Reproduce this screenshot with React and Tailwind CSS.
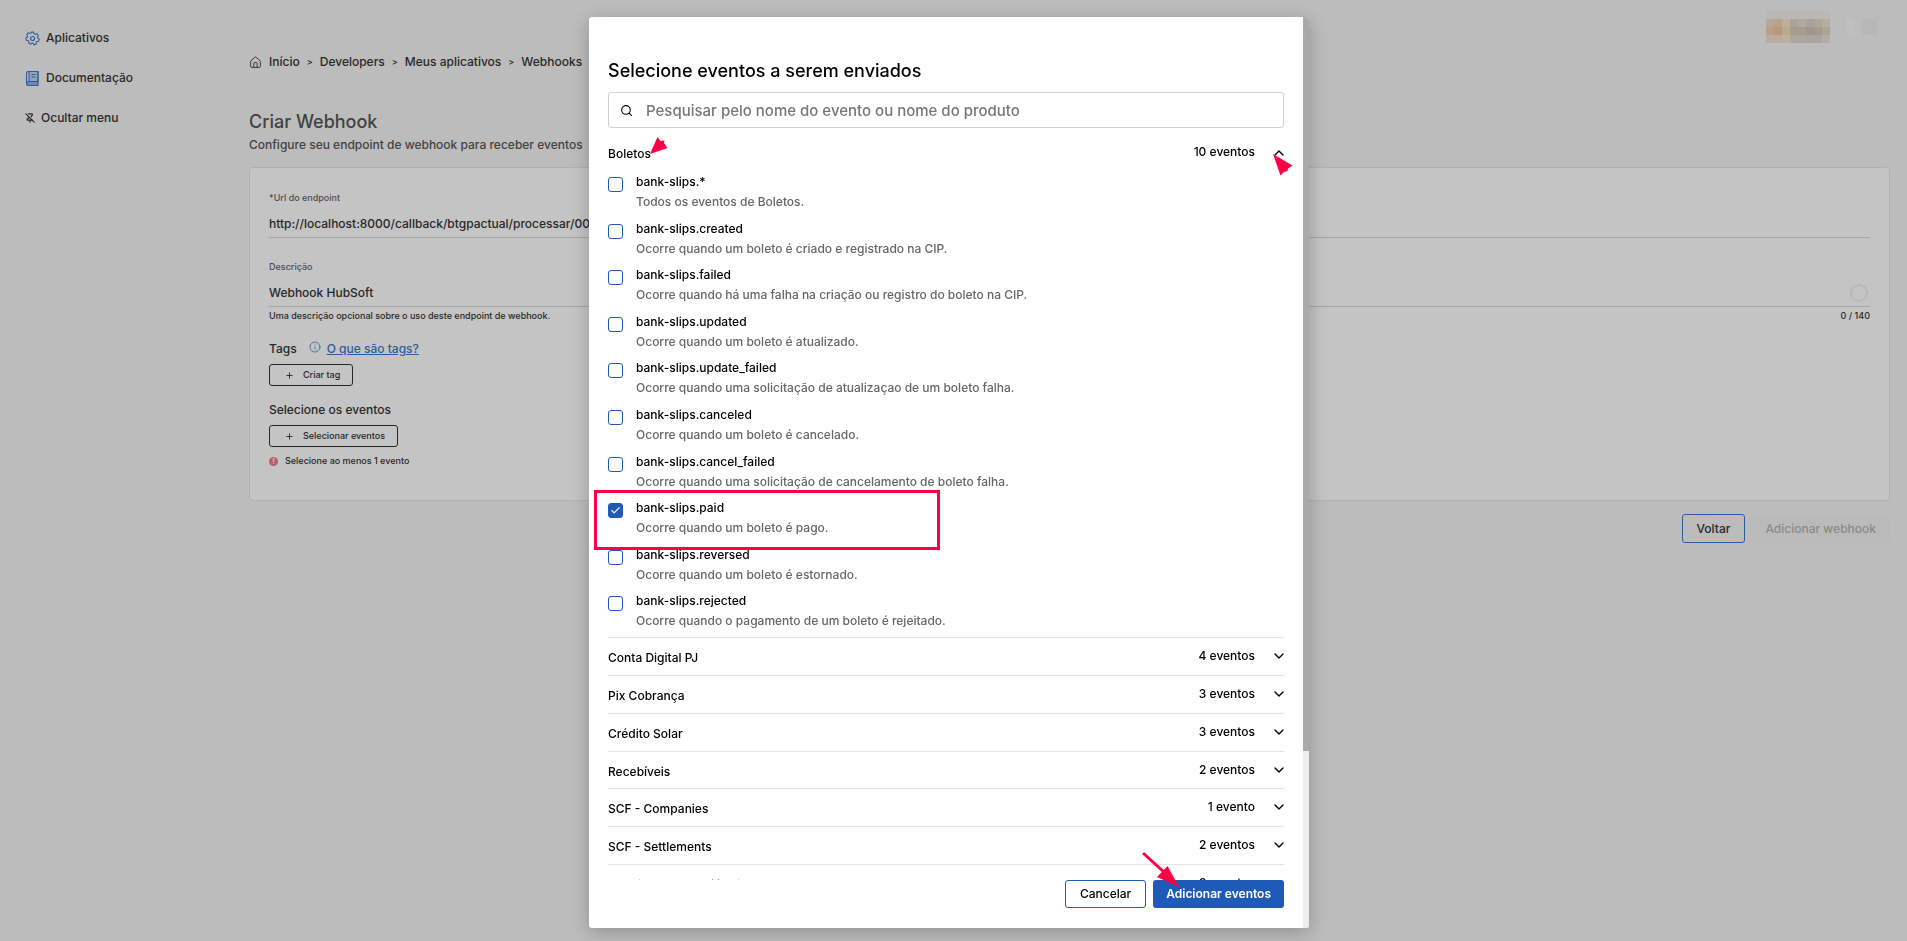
import { Search, ChevronDown, ChevronUp, House, Info, Plus, PinOff, Check } from "lucide-react";

const events = [
  ["bank-slips.*", "Todos os eventos de Boletos."],
  ["bank-slips.created", "Ocorre quando um boleto é criado e registrado na CIP."],
  ["bank-slips.failed", "Ocorre quando há uma falha na criação ou registro do boleto na CIP."],
  ["bank-slips.updated", "Ocorre quando um boleto é atualizado."],
  ["bank-slips.update_failed", "Ocorre quando uma solicitação de atualizaçao de um boleto falha."],
  ["bank-slips.canceled", "Ocorre quando um boleto é cancelado."],
  ["bank-slips.cancel_failed", "Ocorre quando uma solicitação de cancelamento de boleto falha."],
  ["bank-slips.paid", "Ocorre quando um boleto é pago."],
  ["bank-slips.reversed", "Ocorre quando um boleto é estornado."],
  ["bank-slips.rejected", "Ocorre quando o pagamento de um boleto é rejeitado."],
];

const groups = [
  ["Conta Digital PJ", "4 eventos"],
  ["Pix Cobrança", "3 eventos"],
  ["Crédito Solar", "3 eventos"],
  ["Recebíveis", "2 eventos"],
  ["SCF - Companies", "1 evento"],
  ["SCF - Settlements", "2 eventos"],
  ["Gestão para Conciliação", "2 eventos"],
];

function GearIcon() {
  return (
    <svg width="15" height="15" viewBox="0 0 30 30" fill="none" stroke="#3a78cf" strokeWidth="2.4" strokeLinejoin="round">
      <path d="M12.500 2h5l1 3.600 2.600 1.200 3.500-1.500 3.200 4-1.700 3.200.7 2.800 3 2-1.200 4.800-3.700.5-1.900 2.300.3 3.600-4.500 2.100L16 26h-2l-2.800 2.600-4.500-2.100.3-3.600-1.900-2.300-3.700-.5L.2 15.300l3-2 .7-2.800-1.700-3.200 3.200-4 3.500 1.500 2.600-1.200z" transform="translate(1.500 .5) scale(.9)" />
      <circle cx="15" cy="15" r="4" />
    </svg>
  );
}

function BookIcon() {
  return (
    <svg width="15" height="15" viewBox="0 0 30 30" fill="none" stroke="#3a78cf" strokeWidth="2.200" strokeLinejoin="round">
      <path d="M8 1v20h18V1z" fill="#c3d4ee" />
      <path d="M3 25a4 4 0 0 1 4-4h19v8H7a4 4 0 0 1-4-4z" fill="#8fb0e3" />
      <path d="M3 25V5a4 4 0 0 1 4-4h19v20M13 7h8M13 12h8" />
    </svg>
  );
}

function Sidebar() {
  return (
    <nav className="w-[249px] shrink-0 pt-7 pl-[25px] leading-5 text-[#333]">
      <a href="#aplicativos" className="flex h-5 items-center gap-[6px]">
        <GearIcon />
        Aplicativos
      </a>
      <a href="#documentacao" className="mt-5 flex h-5 items-center gap-[6px]">
        <BookIcon />
        Documentação
      </a>
      <button type="button" className="mt-5 flex h-5 items-center gap-[6px]">
        <PinOff size={10} strokeWidth={2.6} />
        Ocultar menu
      </button>
    </nav>
  );
}

function Breadcrumb() {
  const items = ["Início", "Developers", "Meus aplicativos", "Webhooks"];
  return (
    <nav aria-label="Trilha" className="flex h-5 items-center gap-[7px] leading-5 text-[#333]">
      <House size={13} strokeWidth={1.6} />
      <ol className="flex gap-[7px]">
        {items.map((item, i) => (
          <li key={item} className="flex gap-[7px]">
            {i > 0 && <span className="text-[9px]">&gt;</span>}
            <a href={"#" + i}>{item}</a>
          </li>
        ))}
      </ol>
    </nav>
  );
}

function OutlineButton({ children }) {
  return (
    <button type="button" className="flex h-[22px] items-center gap-[9px] rounded-[3px] border border-[#333] pr-3 pl-[15px] text-[9px] leading-4">
      <Plus size={9} strokeWidth={2.4} />
      {children}
    </button>
  );
}

const mosaic = [
  ["#f3eeea", "#f3eeea", "#f3eeea", "#f3eeea", "#f3eeea", "#f3eeea", "#f3eeea", "#f3eeea"],
  ["#f3d9c4", "#f1d4bb", "#f5e6cb", "#dfd5c6", "#e6dccd", "#dcd3c9", "#e3d8ca", "#f0e2cd"],
  ["#f3d0ac", "#f1c59c", "#f3deb8", "#d8ccb8", "#d8ccb8", "#d0c4b5", "#d6cabb", "#e2d5c0"],
  ["#f2e1d0", "#f3dfc9", "#f2e7d5", "#e2dad0", "#e0d8d0", "#e0d6d2", "#e0d6d0", "#ebe2d8"],
];

function Account() {
  return (
    <div className="flex gap-2" aria-hidden="true">
      <div className="mr-2 grid grid-cols-8">
        {mosaic.flat().map((color, i) => (
          <span key={i} className="size-2" style={{ backgroundColor: color }} />
        ))}
      </div>
      <span className="mt-2 h-4 w-2 bg-[#f9f9f9]" />
      <span className="mt-2 h-4 w-4 bg-[#eeeeee]" />
    </div>
  );
}

function Page() {
  return (
    <div className="flex min-h-screen bg-[#f5f5f5]">
      <Sidebar />
      <main className="flex grow flex-col pr-[17px]">
        <div className="flex h-[43px] justify-end pt-[11px] pr-3">
          <Account />
        </div>
        <div className="mt-[9px]">
          <Breadcrumb />
        </div>
        <h1 className="mt-[38px] text-lg leading-6 text-[#555]">Criar Webhook</h1>
        <p className="mt-px leading-5 text-[#555]">Configure seu endpoint de webhook para receber eventos</p>
        <section className="mt-3 h-[334px] rounded border border-[#e6e6e6] bg-white px-[19px] pt-[22px] text-[#333]">
          <label htmlFor="url" className="block text-[9px] leading-4 text-[#666]">*Url do endpoint</label>
          <input id="url" type="text" defaultValue="http://localhost:8000/callback/btgpactual/processar/00" className="block h-8 w-full border-b border-[#d8d8d8] pt-1 leading-5" />
          <label htmlFor="desc" className="mt-[21px] block text-[9px] leading-4 text-[#666]">Descrição</label>
          <div className="flex h-8 items-center border-b border-[#d8d8d8]">
            <input id="desc" type="text" defaultValue="Webhook HubSoft" className="grow pt-1 leading-5" />
            <span className="mt-1 mr-[2px] size-[18px] rounded-full border-2 border-[#f1f1f1]" />
          </div>
          <div className="mt-px flex justify-between text-[9px] leading-4">
            <span>Uma descrição opcional sobre o uso deste endpoint de webhook.</span>
            <span>0 / 140</span>
          </div>
          <div className="mt-[15px] flex leading-5">
            <h2>Tags</h2>
            <Info size={12} strokeWidth={1.6} className="mt-[2px] ml-3 text-[#3a78cf]" />
            <a href="#tags" className="ml-[6px] text-[#3a78cf] underline">O que são tags?</a>
          </div>
          <div className="mt-[5px] flex"><OutlineButton>Criar tag</OutlineButton></div>
          <h2 className="mt-[14px] leading-5">Selecione os eventos</h2>
          <div className="mt-[5px] flex"><OutlineButton>Selecionar eventos</OutlineButton></div>
          <p className="mt-[6px] flex items-center gap-[7px] text-[9px] leading-4">
            <span className="flex size-[9px] items-center justify-center rounded-full bg-[#f2798a] text-[8px] leading-none font-bold text-white">!</span>
            Selecione ao menos 1 evento
          </p>
        </section>
        <div className="mt-[13px] flex justify-end gap-[6px]">
          <button type="button" className="h-[29px] rounded-[3px] border border-[#3a78cf] px-[14px] text-[#333]">Voltar</button>
          <button type="button" disabled className="h-[29px] rounded-[3px] bg-[#f3f3f3] px-[14px] text-[#b4b4b4]">Adicionar webhook</button>
        </div>
      </main>
    </div>
  );
}

function EventRow({ name, text, checked }) {
  return (
    <li className="relative">
      <label className="flex gap-[13px]">
        <span className="relative mt-[6px] size-[15px] shrink-0">
          <input type="checkbox" defaultChecked={checked} className="peer block size-[15px] appearance-none rounded-[3px] border border-[#1f5ab8] checked:bg-[#1f5ab8]" />
          <Check size={11} strokeWidth={2.4} className="pointer-events-none absolute top-[2px] left-[2px] hidden text-white peer-checked:block" />
        </span>
        <span className="pt-px leading-5">
          <span className="block text-black">{name}</span>
          <span className="block text-[#666]">{text}</span>
        </span>
      </label>
      {checked && <span className="pointer-events-none absolute -top-[7px] -left-[14px] h-[60px] w-[346px] border-3 border-[#ff0044]" />}
    </li>
  );
}

function Group({ title, count }) {
  return (
    <button type="button" className="flex w-full items-start border-t border-[#e4e4e4] leading-5">
      <span className="mt-[10px]">{title}</span>
      <span className="mt-2 ml-auto">{count}</span>
      <ChevronDown size={16} strokeWidth={2} className="mt-[10px] -mr-[3px] ml-4" />
    </button>
  );
}

function Modal() {
  return (
    <div className="fixed inset-0 flex justify-center bg-black/23 pt-[17px] pr-[9px] pb-[13px]">
      <div role="dialog" aria-label="Selecione eventos a serem enviados" className="flex w-[720px] overflow-hidden rounded-[3px] bg-white text-black shadow-[0_4px_20px_rgba(0,0,0,0.25)]">
        <div className="flex min-w-0 grow flex-col px-[19px]">
          <h2 className="mt-10 text-lg leading-7">Selecione eventos a serem enviados</h2>
          <label className="mt-[7px] flex h-9 shrink-0 items-center gap-[13px] rounded-[3px] border border-[#d0d0d0] px-[11px]">
            <Search size={13} strokeWidth={2} />
            <input type="search" aria-label="Pesquisar" placeholder="Pesquisar pelo nome do evento ou nome do produto" className="grow pt-px text-[15px] placeholder:text-[#777]" />
          </label>
          <div className="-mx-[19px] flex min-h-0 grow flex-col overflow-hidden px-[19px] pt-[9px]">
            <button type="button" className="relative flex h-[34px] w-full shrink-0 items-start leading-5">
              <span className="mt-[7px]">Boletos</span>
              <span className="mt-[5px] ml-auto">10 eventos</span>
              <ChevronUp size={16} strokeWidth={2} className="mt-[8px] -mr-[3px] ml-4" />
              <svg width="18" height="17" viewBox="0 0 18 17" className="absolute top-0 left-[42px]" fill="#ff0044">
                <path d="M0 17 7.500 0 10.500 4 14.500 3.500 14 6 17.500 11Z" />
              </svg>
              <svg width="20" height="22" viewBox="0 0 20 22" className="absolute top-[17px] -right-[9px]" fill="#ff0044">
                <path d="M0 0 19.500 11.500 15 14.500 14.500 17 11 18 7.500 21.500Z" />
              </svg>
            </button>
            <ul className="grid h-[466px] shrink-0 auto-rows-fr">
              {events.map(([name, text]) => (
                <EventRow key={name} name={name} text={text} checked={name === "bank-slips.paid"} />
              ))}
            </ul>
            <div className="grid h-[265px] shrink-0 auto-rows-fr">
              {groups.map(([title, count]) => (
                <Group key={title} title={title} count={count} />
              ))}
            </div>
          </div>
          <div className="relative flex h-12 shrink-0 items-start justify-end gap-[7px]">
            <button type="button" className="h-7 rounded-[3px] border border-[#1f5ab8] px-[14px]">Cancelar</button>
            <button type="button" className="h-7 rounded-[3px] bg-[#1f5ab8] px-[13px] font-semibold text-white">Adicionar eventos</button>
            <svg width="38" height="37" viewBox="0 0 38 37" className="absolute -top-[29px] right-[105px]" fill="#ff0044">
              <path d="M2 2 24 22" stroke="#ff0044" strokeWidth="3" />
              <path d="M38 36 16 26 26.500 15Z" />
            </svg>
          </div>
        </div>
        <div className="w-[6px] shrink-0 bg-[#eeeeee]">
          <div className="h-[734px] bg-[#a9a9a9]" />
        </div>
      </div>
    </div>
  );
}

export default function App() {
  return (
    <div className="font-[Inter,sans-serif] text-xs font-medium">
      <Page />
      <Modal />
    </div>
  );
}
